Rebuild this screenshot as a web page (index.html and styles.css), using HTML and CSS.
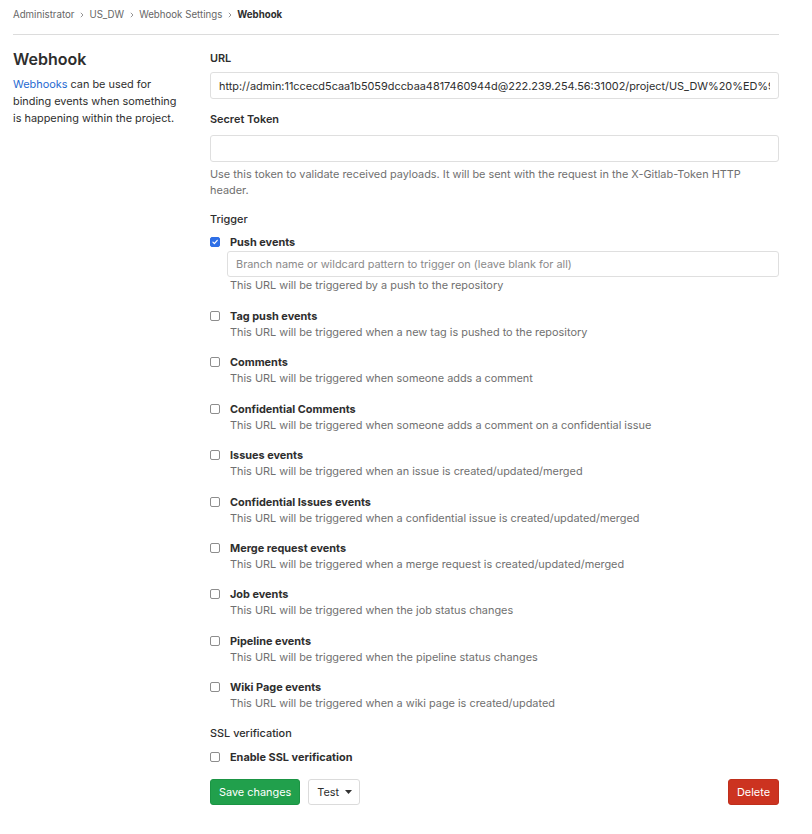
FILE: index.html
```html
<!DOCTYPE html>
<html lang="en">
<head>
<meta charset="utf-8">
<title>Webhook</title>
<link rel="stylesheet" href="styles.css">
</head>
<body>
<div class="page">
  <nav class="breadcrumbs">
    <a class="crumb" href="#">Administrator</a>
    <svg class="chev" viewBox="0 0 4 6" width="4" height="6"><path d="M0.8 0.8 L3 3 L0.8 5.2" fill="none" stroke="#8a8a8a" stroke-width="0.9"/></svg>
    <a class="crumb" href="#">US_DW</a>
    <svg class="chev" viewBox="0 0 4 6" width="4" height="6"><path d="M0.8 0.8 L3 3 L0.8 5.2" fill="none" stroke="#8a8a8a" stroke-width="0.9"/></svg>
    <a class="crumb" href="#">Webhook Settings</a>
    <svg class="chev" viewBox="0 0 4 6" width="4" height="6"><path d="M0.8 0.8 L3 3 L0.8 5.2" fill="none" stroke="#8a8a8a" stroke-width="0.9"/></svg>
    <span class="crumb current">Webhook</span>
  </nav>

  <div class="layout">
    <aside class="intro">
      <h4 class="intro-title">Webhook</h4>
      <p class="intro-text"><a href="#" class="link">Webhooks</a> can be used for binding events when something is happening within the project.</p>
    </aside>

    <form class="settings">
      <label class="label label-url">URL</label>
      <input class="input" type="text" value="http://admin:11ccecd5caa1b5059dccbaa4817460944d@222.239.254.56:31002/project/US_DW%20%ED%95%9C%EA%B8%80">

      <label class="label label-token">Secret Token</label>
      <input class="input" type="text" value="">
      <p class="help">Use this token to validate received payloads. It will be sent with the request in the X-Gitlab-Token HTTP header.</p>

      <div class="section-label">Trigger</div>

      <div class="trigger trigger-push">
        <span class="check checked"><svg viewBox="0 0 10 10" width="10" height="10"><path d="M2.4 5.2 L4.2 7 L7.8 2.9" fill="none" stroke="#fff" stroke-width="1.5" stroke-linecap="round" stroke-linejoin="round"/></svg></span>
        <div class="trigger-body">
          <div class="trigger-name">Push events</div>
          <input class="input input-branch" type="text" placeholder="Branch name or wildcard pattern to trigger on (leave blank for all)">
          <div class="trigger-desc">This URL will be triggered by a push to the repository</div>
        </div>
      </div>

      <div class="trigger">
        <span class="check"></span>
        <div class="trigger-body">
          <div class="trigger-name">Tag push events</div>
          <div class="trigger-desc">This URL will be triggered when a new tag is pushed to the repository</div>
        </div>
      </div>

      <div class="trigger">
        <span class="check"></span>
        <div class="trigger-body">
          <div class="trigger-name">Comments</div>
          <div class="trigger-desc">This URL will be triggered when someone adds a comment</div>
        </div>
      </div>

      <div class="trigger">
        <span class="check"></span>
        <div class="trigger-body">
          <div class="trigger-name">Confidential Comments</div>
          <div class="trigger-desc">This URL will be triggered when someone adds a comment on a confidential issue</div>
        </div>
      </div>

      <div class="trigger">
        <span class="check"></span>
        <div class="trigger-body">
          <div class="trigger-name">Issues events</div>
          <div class="trigger-desc">This URL will be triggered when an issue is created/updated/merged</div>
        </div>
      </div>

      <div class="trigger">
        <span class="check"></span>
        <div class="trigger-body">
          <div class="trigger-name">Confidential Issues events</div>
          <div class="trigger-desc">This URL will be triggered when a confidential issue is created/updated/merged</div>
        </div>
      </div>

      <div class="trigger">
        <span class="check"></span>
        <div class="trigger-body">
          <div class="trigger-name">Merge request events</div>
          <div class="trigger-desc">This URL will be triggered when a merge request is created/updated/merged</div>
        </div>
      </div>

      <div class="trigger">
        <span class="check"></span>
        <div class="trigger-body">
          <div class="trigger-name">Job events</div>
          <div class="trigger-desc">This URL will be triggered when the job status changes</div>
        </div>
      </div>

      <div class="trigger">
        <span class="check"></span>
        <div class="trigger-body">
          <div class="trigger-name">Pipeline events</div>
          <div class="trigger-desc">This URL will be triggered when the pipeline status changes</div>
        </div>
      </div>

      <div class="trigger">
        <span class="check"></span>
        <div class="trigger-body">
          <div class="trigger-name">Wiki Page events</div>
          <div class="trigger-desc">This URL will be triggered when a wiki page is created/updated</div>
        </div>
      </div>

      <div class="section-label section-ssl">SSL verification</div>
      <div class="trigger trigger-ssl">
        <span class="check"></span>
        <div class="trigger-body">
          <div class="trigger-name">Enable SSL verification</div>
        </div>
      </div>

      <div class="actions">
        <button type="button" class="btn btn-save">Save changes</button>
        <button type="button" class="btn btn-test">Test <svg class="caret" viewBox="0 0 7 4" width="7" height="4"><path d="M0 0 H7 L3.5 4 Z" fill="#333"/></svg></button>
        <button type="button" class="btn btn-delete">Delete</button>
      </div>
    </form>
  </div>
</div>
</body>
</html>
```

FILE: styles.css
```css
* {
  box-sizing: border-box;
}

html, body {
  margin: 0;
  padding: 0;
  background: #fff;
}

body {
  font-family: Inter, "Liberation Sans", Arial, sans-serif;
  font-size: 10.9px;
  line-height: 16px;
  color: #2e2e2e;
}

.page {
  padding: 0 33px 0 13px;
}

/* Breadcrumbs */
.breadcrumbs {
  display: flex;
  align-items: center;
  padding: 7px 0 11px;
  border-bottom: 1px solid #dcdcdc;
  font-size: 9.7px;
  line-height: 16px;
}

.crumb {
  color: #666;
  text-decoration: none;
}

.crumb.current {
  color: #2e2e2e;
  font-weight: 700;
}

.chev {
  margin: 0 5px 0 6px;
  flex: none;
}

/* Layout */
.layout {
  display: flex;
  padding-top: 14px;
}

.intro {
  flex: 0 0 197px;
  padding-right: 26px;
}

.intro-title {
  margin: 0;
  font-size: 16px;
  line-height: 20px;
  font-weight: 600;
  color: #2e2e2e;
}

.intro-text {
  margin: 7px 0 0;
  font-size: 10.9px;
  line-height: 17px;
  color: #2e2e2e;
}

.link {
  color: #1f6ad1;
  text-decoration: none;
}

.settings {
  flex: 1;
  min-width: 0;
  display: flex;
  flex-direction: column;
}

.label {
  display: block;
  font-weight: 600;
  font-size: 10.9px;
  line-height: 16px;
  color: #2e2e2e;
}

.label-url {
  margin-top: 1px;
  margin-bottom: 6px;
}

.label-token {
  margin-top: 12px;
  margin-bottom: 8px;
}

.input {
  display: block;
  width: 100%;
  height: 27px;
  padding: 0 8px;
  border: 1px solid #dfdfdf;
  border-radius: 3px;
  font-family: inherit;
  font-size: 10.9px;
  color: #2e2e2e;
  background: #fff;
  outline: none;
}

.input::placeholder {
  color: #8a8a8a;
}

.help {
  margin: 4px 0 0;
  color: #707070;
  line-height: 16px;
}

.section-label {
  margin-top: 13px;
  font-weight: 500;
  color: #2e2e2e;
}

.trigger {
  display: flex;
  align-items: flex-start;
  margin-top: 14.45px;
}

.trigger-push {
  margin-top: 7.4px;
}

.check {
  flex: none;
  width: 10px;
  height: 10px;
  margin-top: 3px;
  margin-right: 10px;
  border: 1px solid #8d8d8d;
  border-radius: 2px;
  background: #fff;
  display: flex;
  align-items: center;
  justify-content: center;
}

.check.checked {
  border-color: #2f6fe6;
  background: #2f6fe6;
}

.check svg {
  display: block;
}

.trigger-body {
  flex: 1;
  min-width: 0;
}

.trigger-name {
  font-weight: 700;
  color: #2e2e2e;
}

.trigger-desc {
  color: #707070;
}

.input-branch {
  width: calc(100% + 3px);
  margin: 1px 0 0 -3px;
  height: 26px;
}

.section-ssl {
  margin-top: 14px;
}

.trigger-ssl {
  margin-top: 8px;
}

/* Actions */
.actions {
  display: flex;
  align-items: center;
  margin-top: 14px;
}

.btn {
  height: 26px;
  padding: 0 8px;
  border-radius: 3px;
  font-family: inherit;
  font-size: 10.9px;
  line-height: 24px;
  cursor: pointer;
}

.btn-save {
  background: #21a04c;
  border: 1px solid #1b9444;
  color: #fff;
  padding: 0 8px;
}

.btn-test {
  margin-left: 8px;
  background: #fff;
  border: 1px solid #dbdbdb;
  color: #2e2e2e;
  display: flex;
  align-items: center;
  gap: 6px;
  padding: 0 7px 0 8px;
}

.caret {
  display: block;
}

.btn-delete {
  margin-left: auto;
  background: #cc3320;
  border: 1px solid #bf2f1c;
  color: #fff;
}
```
